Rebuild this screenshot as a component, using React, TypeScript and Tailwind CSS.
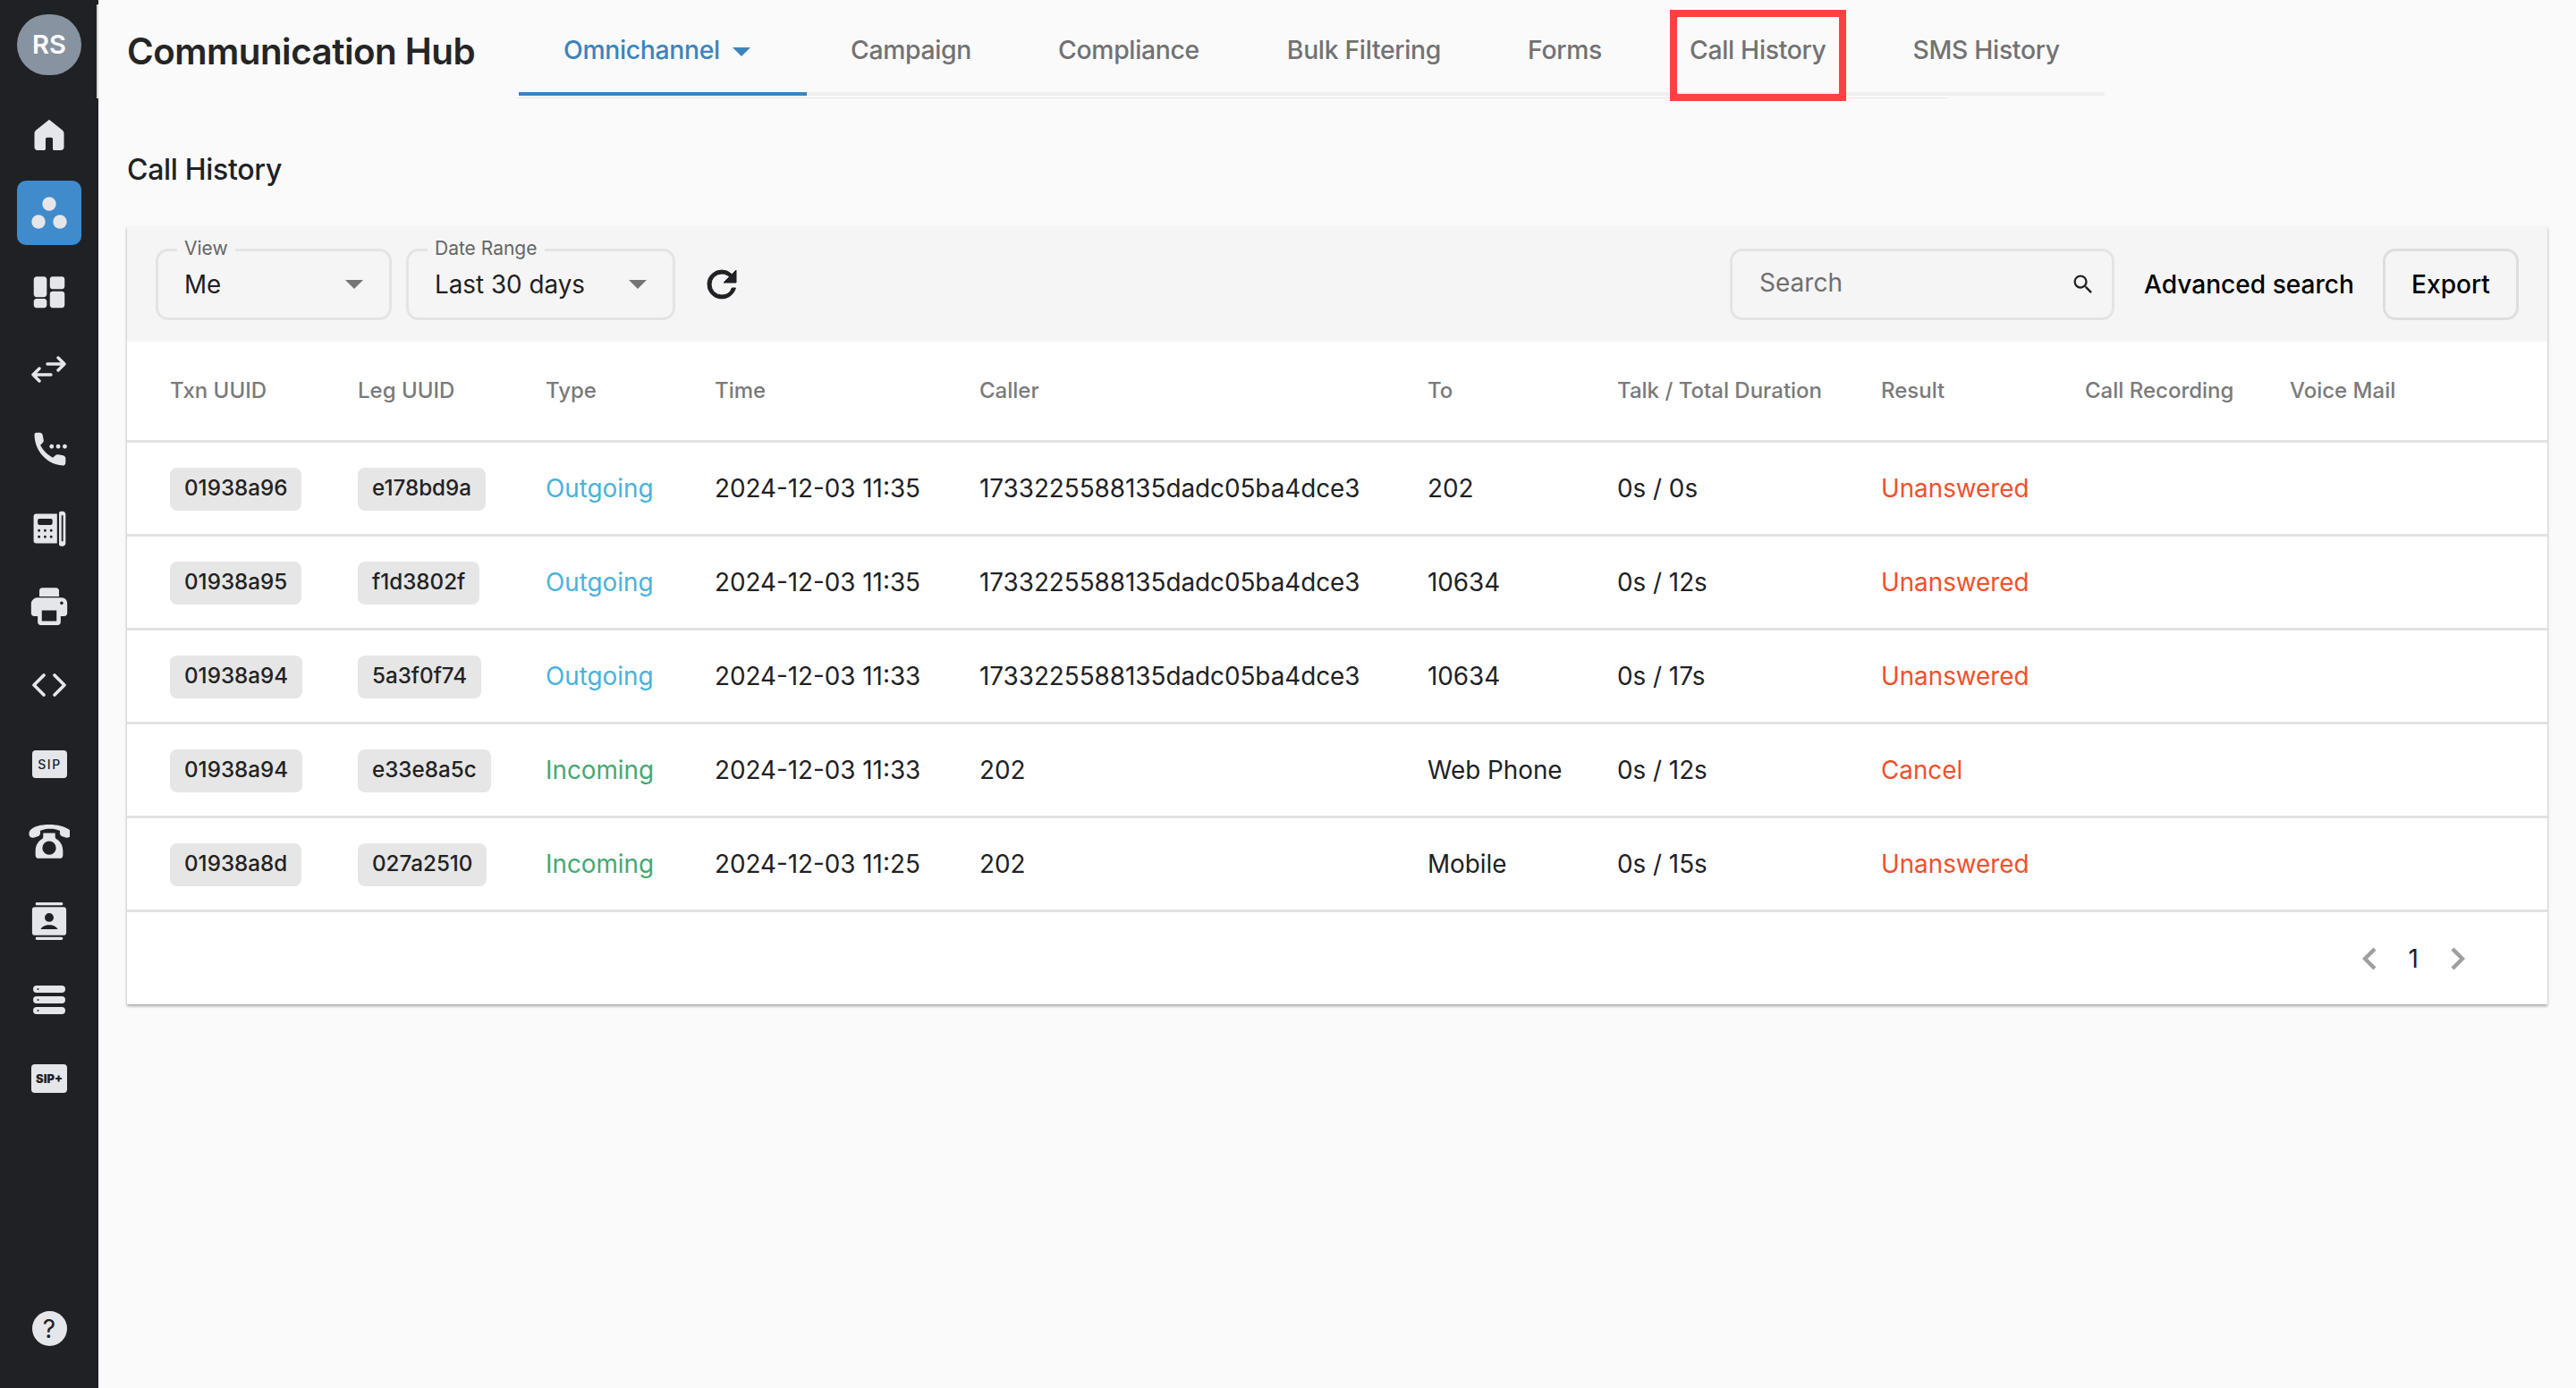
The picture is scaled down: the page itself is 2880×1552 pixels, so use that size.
import React from "react";

const I = ({ children, vb = "0 0 24 24", s = 44 }: { children: React.ReactNode; vb?: string; s?: number }) => (
  <svg viewBox={vb} width={s} height={s} fill="#e5e6ea">{children}</svg>
);

const navIcons: React.ReactNode[] = [
  <I><path d="M12 3.200 4 9.600c-.6.5-1 1.200-1 2V20c0 1 .8 1.800 1.800 1.800H9c.5 0 .8-.4.8-.8v-6c0-.6.4-1 1-1h2.400c.6 0 1 .4 1 1v6c0 .4.3.8.8.8h4.200c1 0 1.800-.8 1.800-1.800v-8.400c0-.8-.4-1.500-1-2z" /></I>,
  null,
  <I s={46}><path d="M3 5c0-1 .8-1.700 1.700-1.700h4.200c1 0 1.700.8 1.700 1.700v8.500c0 1-.8 1.700-1.700 1.700H4.700c-1 0-1.700-.8-1.700-1.700zM12.400 4.800c0-.8.7-1.500 1.500-1.500h5.500c.9 0 1.600.7 1.600 1.500v4.200c0 .9-.7 1.600-1.600 1.600h-5.500c-.8 0-1.500-.7-1.500-1.600zM3 17.800c0-.9.7-1.600 1.500-1.600h4.600c.8 0 1.500.7 1.500 1.600V20c0 .8-.7 1.500-1.500 1.500H4.500C3.700 21.500 3 20.800 3 20zM12.400 13.400c0-.8.7-1.500 1.500-1.500h5.500c.9 0 1.600.7 1.600 1.500V20c0 .8-.7 1.500-1.600 1.500h-5.500c-.8 0-1.500-.7-1.500-1.500z" /></I>,
  <svg width="40" height="32" viewBox="0 0 40 32" fill="none" stroke="#e5e6ea" strokeWidth="3.400" strokeLinecap="round" strokeLinejoin="round"><path d="M18 9h19M30 2l7 7-7 7" /><path d="M22 21H2M9 14l-7 7 7 7" /></svg>,
  <I><path d="M3 3.200c0-.7.6-1.200 1.300-1.200h2c.8 0 1.500.6 1.700 1.400l.6 3.100c.1.700-.1 1.300-.6 1.800L6.600 9.700c1.600 3.200 4.200 5.800 7.700 7.600l1.400-1.300c.5-.5 1.200-.7 1.800-.6l3 .6c.8.200 1.500.9 1.500 1.700v2.700c0 1-.8 1.700-1.800 1.700C10.400 21.500 3 13 3 3.200z" /><circle cx="13.500" cy="10.500" r="1.300" /><circle cx="17.500" cy="10.500" r="1.300" /><circle cx="21.500" cy="10.500" r="1.300" /></I>,
  <I><path fillRule="evenodd" d="M2.500 5c0-.8.6-1.500 1.500-1.500H16.800V21.500H4C3.100 21.500 2.500 20.800 2.500 20zM6 6.500c-.6 0-1 .4-1 1v1.800c0 .5.4 1 1 1h7c.5 0 1-.5 1-1V7.500c0-.6-.5-1-1-1zM5.800 13a.8.8 0 1 0 0 1.600.8.8 0 0 0 0-1.600zm3.700 0a.8.8 0 1 0 0 1.600.8.8 0 0 0 0-1.600zm3.700 0a.8.8 0 1 0 0 1.600.8.8 0 0 0 0-1.600zM5.800 16.800a.8.8 0 1 0 0 1.600.8.8 0 0 0 0-1.600zm3.700 0a.8.8 0 1 0 0 1.600.8.8 0 0 0 0-1.600zm3.700 0a.8.8 0 1 0 0 1.600.8.8 0 0 0 0-1.600z" /><path fillRule="evenodd" d="M18 3.200c0-.7.500-1.200 1.200-1.200h1c1 0 1.800.8 1.800 1.800v17.700c0 1-.8 1.800-1.800 1.800h-1c-.7 0-1.200-.5-1.200-1.200zM19.500 4.500v15.800h1V4.500z" /></I>,
  <I s={44}><path fillRule="evenodd" d="M6 2.500c0-1 .8-1.800 1.800-1.800h8.400c1 0 1.800.8 1.800 1.800V6H6zM2 8c-.6.6-1 1.300-1 2.200v6c0 1 .8 1.800 1.800 1.800H5v3.700c0 1 .8 1.800 1.800 1.800h10.400c1 0 1.800-.8 1.800-1.800V18h2.200c1 0 1.800-.8 1.800-1.800v-6c0-2-1.500-3.500-3.500-3.500h-15C3.500 6.700 2.700 7.200 2 8zM7.500 14.500h9v6.500h-9zM19.600 9a1 1 0 1 1 0 2 1 1 0 0 1 0-2z" /></I>,
  <svg width="40" height="26" viewBox="0 0 40 26" fill="none" stroke="#e5e6ea" strokeWidth="3.600" strokeLinecap="round" strokeLinejoin="round"><path d="M14 2 3 13l11 11" /><path d="m26 2 11 11-11 11" /></svg>,
  <svg viewBox="0 0 39 31" width={39} height={31}><rect width="39" height="31" rx="4" fill="#e5e6ea" /><text x="19.500" y="20.500" textAnchor="middle" fontSize="14" fontWeight="500" letterSpacing="1.500" fontFamily="Inter, sans-serif" fill="#202124">SIP</text></svg>,
  <I s={46}><path d="M12 1.500C7 1.500 3.200 2.600 1.200 4.500.2 5.500 0 7 .5 8.200c.4.900 1.700 1.200 2.800.9l2-.6c1-.3 1.600-1.300 1.500-2.300l-.1-1c1.800-.8 3.700-1.100 5.800-1.100s4 .3 5.800 1.100l-.1 1c-.1 1 .5 2 1.500 2.300l2 .6c1.100.3 2.400 0 2.800-.9.500-1.200.3-2.700-.7-3.700C20.800 2.600 17 1.500 12 1.500z" /><path fillRule="evenodd" d="M8.500 6.500h7v2.200c0 .6.400 1.200 1 1.500C18.600 11.500 20 14 20 17v2.500c0 1-.8 1.800-1.800 1.800H5.800c-1 0-1.800-.8-1.800-1.800V17c0-3 1.400-5.500 3.500-6.800.6-.3 1-.9 1-1.500zM12 11.200a4 4 0 1 0 0 8 4 4 0 0 0 0-8z" /></I>,
  <I vb="0 0 40 44" s={42}><rect x="4" y="0" width="32" height="3.500" rx="1.500" /><rect x="4" y="40.500" width="32" height="3.500" rx="1.500" /><path fillRule="evenodd" d="M3 5.500h34c1.700 0 3 1.300 3 3v27c0 1.700-1.300 3-3 3H3c-1.700 0-3-1.300-3-3v-27c0-1.700 1.300-3 3-3zM20 12.500a5.200 5.200 0 1 0 0 10.400 5.200 5.200 0 0 0 0-10.400zm-10 19h20c-1.500-3-5.500-5-10-5s-8.500 2-10 5z" /></I>,
  <I vb="0 0 36 32" s={36}><path fillRule="evenodd" d="M4 0h28a4 4 0 0 1 0 8H4a4 4 0 0 1 0-8zm1.500 3a1 1 0 1 0 0 2 1 1 0 0 0 0-2zM4 12h28a4 4 0 0 1 0 8H4a4 4 0 0 1 0-8zm1.500 3a1 1 0 1 0 0 2 1 1 0 0 0 0-2zM4 24h28a4 4 0 0 1 0 8H4a4 4 0 0 1 0-8zm1.500 3a1 1 0 1 0 0 2 1 1 0 0 0 0-2z" /></I>,
  <svg viewBox="0 0 40 32" width={40} height={32}><rect width="40" height="32" rx="4" fill="#e5e6ea" /><text x="20" y="20.500" textAnchor="middle" fontSize="13" fontWeight="900" fontFamily="Inter, sans-serif" fill="#202124">SIP+</text></svg>,
];

const Caret = () => (
  <svg width="20" height="10" viewBox="0 0 20 10"><path d="M0 0h20L10 10z" fill="#757575" /></svg>
);

const rows = [
  ["01938a96", "e178bd9a", "Outgoing", "2024-12-03 11:35", "1733225588135dadc05ba4dce3", "202", "0s / 0s", "Unanswered"],
  ["01938a95", "f1d3802f", "Outgoing", "2024-12-03 11:35", "1733225588135dadc05ba4dce3", "10634", "0s / 12s", "Unanswered"],
  ["01938a94", "5a3f0f74", "Outgoing", "2024-12-03 11:33", "1733225588135dadc05ba4dce3", "10634", "0s / 17s", "Unanswered"],
  ["01938a94", "e33e8a5c", "Incoming", "2024-12-03 11:33", "202", "Web Phone", "0s / 12s", "Cancel"],
  ["01938a8d", "027a2510", "Incoming", "2024-12-03 11:25", "202", "Mobile", "0s / 15s", "Unanswered"],
];

const headers = ["Txn UUID", "Leg UUID", "Type", "Time", "Caller", "To", "Talk / Total Duration", "Result", "Call Recording", "Voice Mail"];

const gridCols = "grid grid-cols-[210px_210px_189px_296px_501px_212px_295px_228px_229px_1fr] items-center pl-[48px] border-b-[3px] border-[#e2e2e4]";

const tabs = [
  ["Campaign", "ml-[49px]"],
  ["Compliance", "ml-[97px]"],
  ["Bulk Filtering", "ml-[98px]"],
  ["Forms", "ml-[97px]"],
  ["Call History", "ml-[98px]"],
  ["SMS History", "ml-[97px]"],
];

const Field = ({ label, value, w }: { label: string; value: string; w: string }) => (
  <div className={`relative h-[80px] ${w} rounded-[14px] border-[3px] border-[#e4e4e4] flex items-center justify-between pl-[29px] pr-[29px]`}>
    <span className="absolute -top-[16px] left-[21px] px-[8px] bg-[#f5f5f5] text-[21px] leading-[26px] text-[#666666]">{label}</span>
    <span className="text-[27.8px] text-[#1f1f1f] pt-[2px]">{value}</span>
    <Caret />
  </div>
);

export default function App() {
  return (
    <div className="relative w-[2880px] h-[1552px] flex bg-[#fafafa] overflow-hidden font-['Inter',sans-serif] text-[#202124]">
      <aside className="w-[110px] shrink-0 h-full bg-[#202124] flex flex-col items-center pt-[16px] pb-[47px]">
        <div className="w-[72px] h-[68px] rounded-full bg-[#8893a1] flex items-center justify-center text-white text-[29px] font-semibold shrink-0">RS</div>
        <div className="h-[22px] shrink-0" />
        <div className="flex flex-col items-center">
          {navIcons.map((ic, i) =>
            i === 1 ? (
              <div key={i} className="w-[88px] h-[88px] flex items-center justify-center">
                <div className="w-[72px] h-[72px] rounded-[10px] bg-[#3f8bcb] flex items-center justify-center">
                  <svg width="44" height="44" viewBox="0 0 44 44" fill="#e5e6ea"><circle cx="22" cy="12" r="7.700" /><circle cx="10" cy="32" r="7.700" /><circle cx="34" cy="32" r="7.700" /></svg>
                </div>
              </div>
            ) : (
              <div key={i} className="w-[88px] h-[88px] flex items-center justify-center">{ic}</div>
            )
          )}
        </div>
        <div className="flex-1" />
        <div className="w-[39px] h-[39px] rounded-full bg-[#e5e6ea] flex items-center justify-center text-[#202124] text-[28px] font-normal">?</div>
      </aside>
      <div className="absolute left-[108px] top-[5px] w-[2px] h-[105px] bg-[#d8d8d8]" />

      <main className="flex-1 min-w-0 flex flex-col">
        <header className="relative h-[110px] shrink-0 flex items-start">
          <h1 className="ml-[32px] mt-[32px] w-[389px] whitespace-nowrap text-[40.300px] leading-[52px] font-semibold text-[#252525] tracking-[-0.5px]">Communication Hub</h1>
          <nav className="ml-[49px] flex items-center h-[107px] border-b-[4px] border-[#efefef] pr-[50px]">
            <div className="h-[107px] w-[322px] flex items-center gap-[14px] pl-[50px] text-[#3a84bd] text-[28.300px] font-medium border-b-[4px] border-[#3a84bd] -mb-[4px] pt-[9px]">
              <span className="tracking-[-0.3px]">Omnichannel</span>
              <span className="mt-[3px]"><svg width="20" height="10" viewBox="0 0 20 10"><path d="M0 0h20L10 10z" fill="#3a84bd" /></svg></span>
            </div>
            {tabs.map(([t, m]) => (
              <span key={t} className={`${m} text-[28.300px] font-medium text-[#727272] tracking-[-0.3px] mt-[9px]`}>{t}</span>
            ))}
          </nav>
          <div className="absolute left-[467px] top-[109px] w-[1600px] h-[1px] bg-[#e6e6e6]" />
          <div className="absolute left-[1757px] top-[11px] w-[197px] h-[102px] border-[8px] border-[#ff4040]" />
        </header>

        <h2 className="ml-[32px] mt-[58px] text-[32px] leading-[44px] font-medium text-[#202124] tracking-[-0.3px]">Call History</h2>

        <section className="ml-[32px] mt-[41px] w-[2706px] h-[870px] bg-white shadow-[0_2px_3px_rgba(0,0,0,0.35)] flex flex-col">
          <div className="h-[129px] shrink-0 bg-[#f5f5f5] flex items-center pl-[32px] pr-[32px]">
            <Field label="View" value="Me" w="w-[264px]" />
            <div className="w-[16px]" />
            <Field label="Date Range" value="Last 30 days" w="w-[301px]" />
            <svg className="ml-[28px]" width="48" height="48" viewBox="0 0 24 24" fill="#202124" stroke="#202124" strokeWidth="0.500"><path d="M17.650 6.350A7.960 7.960 0 0 0 12 4a8 8 0 1 0 7.730 10h-2.080A5.990 5.990 0 0 1 12 18a6 6 0 1 1 0-12c1.660 0 3.140.69 4.220 1.780L13 11h7V4z" /></svg>
            <div className="flex-1" />
            <div className="h-[80px] w-[430px] rounded-[14px] border-[3px] border-[#e4e4e4] flex items-center justify-between pl-[30px] pr-[18px]">
              <span className="text-[28px] text-[#6f6f6f] -mt-[4px]">Search</span>
              <svg width="28" height="28" viewBox="0 0 24 24" fill="#222"><path d="M15.500 14h-.790l-.280-.270A6.470 6.470 0 0 0 16 9.500 6.500 6.500 0 1 0 9.500 16c1.610 0 3.090-.590 4.230-1.570l.270.280v.790l5 4.990L20.490 19zm-6 0C7.010 14 5 11.990 5 9.500S7.010 5 9.500 5 14 7.010 14 9.500 11.990 14 9.500 14z" /></svg>
            </div>
            <span className="ml-[33px] text-[28.100px] font-medium text-[#000000] pt-[1px]">Advanced search</span>
            <div className="ml-[32px] h-[80px] w-[152px] rounded-[14px] border-[3px] border-[#dedede] flex items-center justify-center text-[28.100px] font-medium text-[#000000] pt-[1px]">Export</div>
          </div>

          <div className={`${gridCols} h-[113px] shrink-0 text-[24px] font-medium text-[#7a7a7a]`}>
            {headers.map((h) => (
              <span key={h} className="whitespace-nowrap">{h}</span>
            ))}
          </div>

          {rows.map((r, i) => (
            <div key={i} className={`${gridCols} h-[105px] shrink-0 pt-[1px] text-[27.800px] text-[#202124]`}>
              <span><span className="inline-flex h-[48px] items-center px-[16px] rounded-[8px] bg-[#e6e6e6] text-[24.200px] font-medium text-[#222222]">{r[0]}</span></span>
              <span><span className="inline-flex h-[48px] items-center px-[16px] rounded-[8px] bg-[#e6e6e6] text-[24.200px] font-medium text-[#222222]">{r[1]}</span></span>
              <span className={r[2] === "Outgoing" ? "text-[#4ab2da]" : "text-[#45a873]"}>{r[2]}</span>
              <span className="whitespace-nowrap">{r[3]}</span>
              <span className="whitespace-nowrap">{r[4]}</span>
              <span className="whitespace-nowrap">{r[5]}</span>
              <span>{r[6]}</span>
              <span className="text-[#f0502e]">{r[7]}</span>
              <span />
              <span />
            </div>
          ))}

          <div className="flex-1 flex items-center justify-end pr-[92px]">
            <svg width="16" height="26" viewBox="0 0 16 26" fill="none" stroke="#9e9e9e" strokeWidth="4.400"><path d="M14 2 3 13l11 11" /></svg>
            <span className="mx-[36px] text-[28px] text-[#202124]">1</span>
            <svg width="16" height="26" viewBox="0 0 16 26" fill="none" stroke="#9e9e9e" strokeWidth="4.400"><path d="M2 2l11 11L2 24" /></svg>
          </div>
        </section>
      </main>
    </div>
  );
}
